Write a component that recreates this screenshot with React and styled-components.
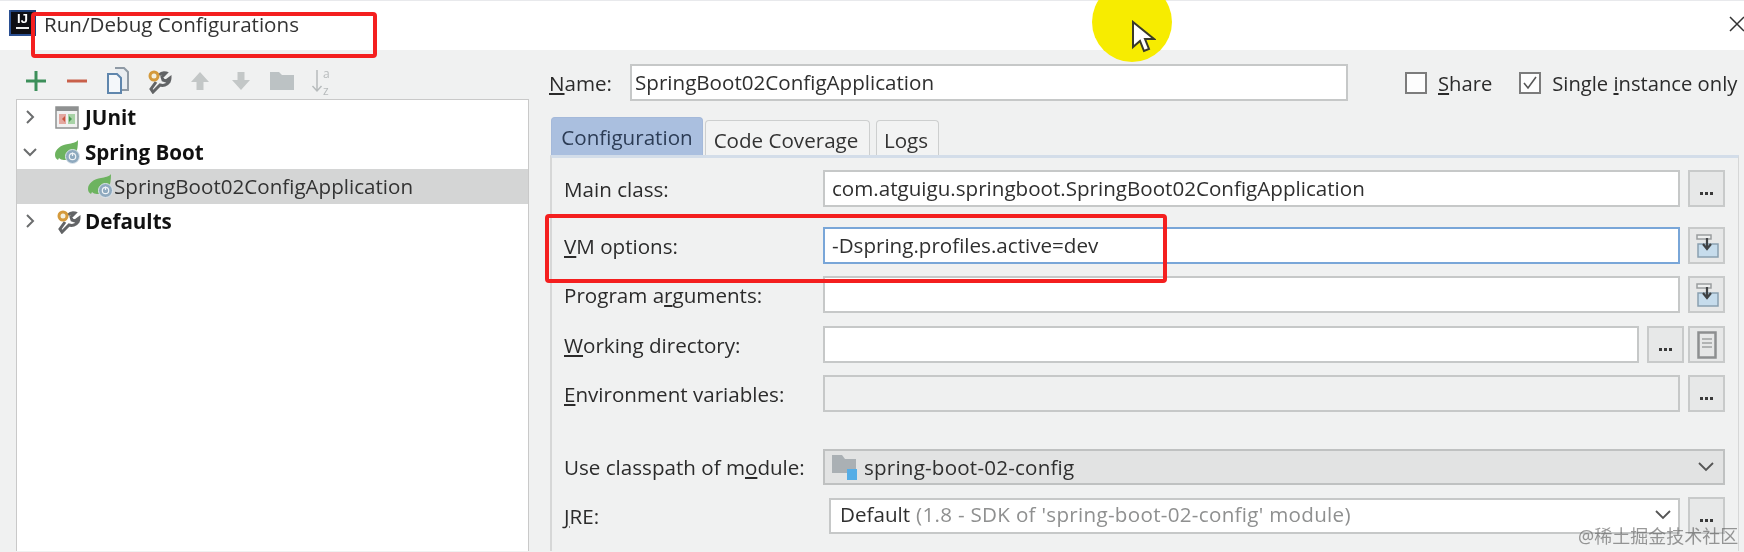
import React from "react";
import styled, { createGlobalStyle } from "styled-components";

const GlobalStyle = createGlobalStyle`
  html, body {
    margin: 0;
    padding: 0;
    background: #f0f1f1;
  }
  * {
    box-sizing: border-box;
  }
`;

const Page = styled.div`
  position: relative;
  width: 1744px;
  height: 552px;
  overflow: hidden;
  background: #f0f1f1;
  color: #2b2b2b;
  font-family: "Open Sans", "Noto Sans", sans-serif;
  font-size: 20.6px;
  filter: blur(0.55px);
`;

const TitleBar = styled.header`
  display: flex;
  align-items: flex-start;
  height: 50px;
  padding: 10px 0 0 9px;
  background: #fff;
  border-top: 1px solid #e8e9ec;
`;

const Logo = styled.div`
  display: flex;
  flex-direction: column;
  align-items: center;
  width: 27px;
  height: 26px;
  margin-top: -1px;
  padding-top: 1px;
  background: #0e0e14;
  box-shadow: inset -2px 0 0 #1f3f78, inset 2px -2px 0 #2a4f92, inset 0 2px 0 #1f3f78;
  color: #fff;
  font-family: "Liberation Sans", sans-serif;
  font-size: 13px;
  font-weight: 700;
  line-height: 15px;
  &::after {
    content: "";
    width: 13px;
    height: 2px;
    margin-top: 1px;
    background: #eee;
  }
`;

const Title = styled.h1`
  margin: -1px 0 0 8px;
  font-size: 20.6px;
  font-weight: 400;
  line-height: 28px;
  color: #333;
`;

const CloseIcon = styled.svg`
  position: absolute;
  top: 16px;
  left: 1729px;
`;

const Body = styled.main`
  display: flex;
  height: 501px;
`;

const Sidebar = styled.aside`
  display: flex;
  flex-direction: column;
  width: 549px;
  padding-left: 16px;
  padding-right: 20px;
`;

const Toolbar = styled.div`
  display: grid;
  grid-template-columns: repeat(8, 41px);
  justify-items: center;
  align-items: center;
  height: 49px;
  margin-left: -1px;
  padding-top: 12px;
`;

const Tree = styled.ul`
  flex: 1;
  margin: 0;
  padding: 0;
  list-style: none;
  background: #fff;
  border: 1px solid #c9c9c9;
  border-bottom: 0;
`;

const TreeRow = styled.li`
  display: flex;
  align-items: center;
  height: 34.6px;
  padding-left: ${(p) => p.$indent}px;
  background: ${(p) => (p.$selected ? "#d4d5d5" : "transparent")};
  font-size: 20.6px;
  font-weight: ${(p) => (p.$bold ? 700 : 400)};
  color: ${(p) => (p.$bold ? "#111" : "#333")};
`;

const Arrow = styled.svg`
  flex: none;
  width: 14px;
  height: 14px;
  margin-right: 18px;
`;

const TreeIconBox = styled.span`
  display: flex;
  flex: none;
  margin-right: ${(p) => p.$gap}px;
`;

const Content = styled.section`
  flex: 1;
  display: flex;
  flex-direction: column;
  padding-right: 5px;
`;

const NameRow = styled.div`
  display: flex;
  align-items: center;
  height: 37px;
  margin-top: 14px;
`;

const NameLabel = styled.label`
  width: 81px;
  flex: none;
`;

const Field = styled.div`
  display: flex;
  align-items: center;
  flex: ${(p) => (p.$width ? "none" : 1)};
  width: ${(p) => (p.$width ? `${p.$width}px` : "auto")};
  min-width: 0;
  height: ${(p) => p.$height || 37}px;
  padding-left: ${(p) => p.$pad || 7}px;
  padding-bottom: 2px;
  background: ${(p) => (p.$disabled ? "#eff0f0" : "#fff")};
  border: 2px solid ${(p) => (p.$focused ? "#79a6d8" : "#c6c8c8")};
  white-space: nowrap;
  color: #2f2f2f;
`;

const Check = styled.label`
  display: flex;
  align-items: center;
  margin-left: ${(p) => p.$left}px;
  font-size: 20.2px;
`;

const Box = styled.span`
  display: flex;
  align-items: center;
  justify-content: center;
  width: 22px;
  height: 22px;
  margin-right: ${(p) => p.$gap}px;
  background: #fdfdfd;
  border: 2px solid #7c7c7c;
`;

const Key = styled.span`
  text-decoration: underline;
  text-underline-offset: 2px;
`;

const Tabs = styled.div`
  display: flex;
  align-items: flex-end;
  height: 54px;
  margin: 0 0 0 2px;
`;

const Tab = styled.div`
  display: flex;
  align-items: center;
  justify-content: center;
  width: ${(p) => p.$width}px;
  height: ${(p) => (p.$active ? 38 : 35)}px;
  margin-right: ${(p) => p.$gap}px;
  padding-top: ${(p) => (p.$active ? 0 : 3)}px;
  padding-right: ${(p) => (p.$active ? 0 : 3)}px;
  border-radius: 4px 4px 0 0;
  background: ${(p) => (p.$active ? "#aabfdf" : "#f2f3f3")};
  border: 1px solid ${(p) => (p.$active ? "#a4b9da" : "#cdcfcf")};
  border-bottom: 0;
  color: ${(p) => (p.$active ? "#2c3c55" : "#333")};
`;

const Panel = styled.div`
  flex: 1;
  display: flex;
  flex-direction: column;
  margin-left: 1px;
  padding: 12px 13px 0 12px;
  border-top: 3px solid #d3dde9;
  border-left: 2px solid #d6d7d7;
  border-right: 1px solid #d6d7d7;
`;

const FormRow = styled.div`
  display: flex;
  align-items: center;
  margin-top: ${(p) => p.$top || 0}px;
`;

const RowLabel = styled.label`
  flex: none;
  width: ${(p) => p.$width || 259}px;
  white-space: nowrap;
`;

const SquareButton = styled.button`
  display: flex;
  align-items: center;
  justify-content: center;
  flex: none;
  width: 37px;
  height: ${(p) => p.$height || 37}px;
  margin-left: ${(p) => p.$left || 8}px;
  padding: 0;
  background: #e7e8e8;
  border: 2px solid #c8caca;
  color: #333;
`;

const Dots = styled.span`
  display: flex;
  gap: 2px;
  margin-top: 9px;
  & i {
    width: 3px;
    height: 3px;
    background: #3a3a3a;
  }
`;

const Select = styled.div`
  flex: 1;
  display: flex;
  align-items: center;
  height: 36px;
  padding: 0 9px 0 7px;
  background: #e2e3e3;
  border: 2px solid #bfc1c1;
`;

const ModuleName = styled.span`
  flex: 1;
  margin-left: 7px;
  letter-spacing: 0.2px;
  color: #2f2f2f;
`;

const Muted = styled.span`
  color: #8f9090;
  margin-left: 6px;
  letter-spacing: 0.3px;
`;

const FieldText = styled.span`
  flex: 1;
  padding-bottom: 2px;
`;

const RedFrame = styled.div`
  position: absolute;
  left: ${(p) => p.$x}px;
  top: ${(p) => p.$y}px;
  width: ${(p) => p.$w}px;
  height: ${(p) => p.$h}px;
  border: 4px solid #f41f1f;
  border-radius: 4px;
`;

const Spotlight = styled.div`
  position: absolute;
  left: 1092px;
  top: -18px;
  width: 80px;
  height: 80px;
  border-radius: 50%;
  background: #f7ec00;
`;

const Pointer = styled.svg`
  position: absolute;
  left: 1130px;
  top: 20px;
`;

const Watermark = styled.div`
  position: absolute;
  left: 1578px;
  top: 524px;
  color: rgba(90, 90, 90, 0.62);
  font-family: "Noto Sans", "Noto Sans CJK SC", sans-serif;
  font-size: 18px;
  line-height: 24px;
  white-space: nowrap;
`;

const Plus = () => (
  <svg width="24" height="24" viewBox="0 0 24 24">
    <path d="M12 2v20M2 12h20" stroke="#3c8f5a" strokeWidth="3" />
  </svg>
);

const Minus = () => (
  <svg width="24" height="24" viewBox="0 0 24 24">
    <path d="M2 12h20" stroke="#c9604a" strokeWidth="3" />
  </svg>
);

const Copy = () => (
  <svg width="24" height="28" viewBox="0 0 24 28">
    <path d="M9 1h9l4 4v18h-6" fill="#e9edf1" stroke="#8f9aa5" strokeWidth="2" />
    <path d="M2 7h9l4 4v15H2z" fill="#f4f7fa" stroke="#5f86ad" strokeWidth="2" />
  </svg>
);

const Wrench = ({ size = 26 }) => (
  <svg width={size} height={size} viewBox="0 0 26 26">
    <path d="M10 14L5 21l2 3 7-7c3 1 7 0 9-3 1-2 1-3 1-4l-4 3-3-1-1-3 4-4c-3-1-5 0-7 2" fill="none" stroke="#626466" strokeWidth="3" />
    <circle cx="8" cy="8" r="4" fill="#f4f0df" stroke="#d49a3c" strokeWidth="3" />
  </svg>
);

const ArrowUp = () => (
  <svg width="24" height="24" viewBox="0 0 24 24">
    <path d="M12 3l9 10h-5.5v8h-7v-8H3z" fill="#c3c7c7" />
  </svg>
);

const ArrowDown = () => (
  <svg width="24" height="24" viewBox="0 0 24 24">
    <path d="M12 21L3 11h5.5V3h7v8H21z" fill="#c3c7c7" />
  </svg>
);

const Folder = () => (
  <svg width="24" height="20" viewBox="0 0 24 20">
    <path d="M0 1h9l3 3h12v15H0z" fill="#bcc2c4" />
  </svg>
);

const SortAz = () => (
  <svg width="24" height="28" viewBox="0 0 24 28" fontFamily="Open Sans, sans-serif" fontSize="12" fill="#b7bbbc" overflow="visible">
    <path d="M6 3v21M1.500 19l4.500 5 4.500-5" fill="none" stroke="#b7bbbc" strokeWidth="1.500" />
    <text x="12" y="11">a</text>
    <text x="12" y="27.500">z</text>
  </svg>
);

const JUnitIcon = () => (
  <svg width="24" height="23" viewBox="0 0 24 23">
    <rect x="1" y="1" width="22" height="21" fill="#f1f1f1" stroke="#8f9191" strokeWidth="1.500" />
    <rect x="1" y="1" width="22" height="4" fill="#8f9191" />
    <path d="M4 8h7v10H4z" fill="#e3a8a0" />
    <path d="M13 8h7v10h-7z" fill="#a8d2a6" />
    <path d="M10 10l-3 3 3 3z" fill="#c9543f" />
    <path d="M14 10l3 3-3 3z" fill="#4b9a55" />
  </svg>
);

const SpringIcon = () => (
  <svg width="25" height="24" viewBox="0 0 25 24">
    <path d="M23 0c-2 3-6 3-10 4C6 5 0 9 0 15c0 2 1 4 3 5l1-2c1 1 3 2 5 2h6c5-2 8-8 8-20z" fill="#6db35f" />
    <circle cx="17.500" cy="16.500" r="7" fill="#8faabf" stroke="#dfe6ec" strokeWidth="1" />
    <circle cx="17.500" cy="16.500" r="3.200" fill="none" stroke="#f0f4f7" strokeWidth="1.200" />
    <path d="M17.500 12.500v3.500" stroke="#f0f4f7" strokeWidth="1.200" />
  </svg>
);

const Chevron = ({ open }) => (
  <Arrow viewBox="0 0 14 14">
    <path d={open ? "M1 4l6 6 6-6" : "M4 1l6 6-6 6"} fill="none" stroke="#6b6d6e" strokeWidth="2" />
  </Arrow>
);

const DropChevron = ({ right = 0 }) => (
  <svg width="16" height="10" viewBox="0 0 16 10" style={{ marginRight: right }}>
    <path d="M1 1l7 7 7-7" fill="none" stroke="#555" strokeWidth="1.800" />
  </svg>
);

const Insert = () => (
  <svg width="26" height="26" viewBox="0 0 26 26">
    <path d="M3 2h14v4H3z" fill="#eef0f0" stroke="#9a9d9e" strokeWidth="1.500" />
    <path d="M4 11h20v13H4z" fill="#c6dcec" stroke="#8aa0b0" strokeWidth="1.500" />
    <path d="M13 5v10M9 11l4 5 4-5" fill="none" stroke="#3f4244" strokeWidth="2.200" />
  </svg>
);

const Doc = () => (
  <svg width="20" height="28" viewBox="0 0 20 28">
    <rect x="1.500" y="1.500" width="17" height="25" fill="#e6e7e7" stroke="#8d8f90" strokeWidth="2.500" />
    <path d="M5 8h10M5 12h10M5 16h10" stroke="#a0a2a3" strokeWidth="1.300" />
  </svg>
);

const ModuleIcon = () => (
  <svg width="25" height="26" viewBox="0 0 25 26">
    <path d="M0 1h10l3 4h11v14H0z" fill="#aab0b4" />
    <rect x="15" y="15" width="10" height="11" fill="#55ade6" />
  </svg>
);

const MoreButton = (props) => (
  <SquareButton {...props}>
    <Dots>
      <i />
      <i />
      <i />
    </Dots>
  </SquareButton>
);

const App = () => {
  return (
    <Page>
      <GlobalStyle />
      <TitleBar>
        <Logo>IJ</Logo>
        <Title>Run/Debug Configurations</Title>
        <CloseIcon width="16" height="16" viewBox="0 0 16 16">
          <path d="M1 1l14 14M15 1L1 15" stroke="#333" strokeWidth="1.500" />
        </CloseIcon>
      </TitleBar>

      <Body>
        <Sidebar>
          <Toolbar>
            <Plus />
            <Minus />
            <Copy />
            <Wrench />
            <ArrowUp />
            <ArrowDown />
            <Folder />
            <SortAz />
          </Toolbar>
          <Tree>
            <TreeRow $indent={6} $bold>
              <Chevron />
              <TreeIconBox $gap={6}>
                <JUnitIcon />
              </TreeIconBox>
              JUnit
            </TreeRow>
            <TreeRow $indent={6} $bold>
              <Chevron open />
              <TreeIconBox $gap={5}>
                <SpringIcon />
              </TreeIconBox>
              Spring Boot
            </TreeRow>
            <TreeRow $indent={71} $selected>
              <TreeIconBox $gap={1}>
                <SpringIcon />
              </TreeIconBox>
              SpringBoot02ConfigApplication
            </TreeRow>
            <TreeRow $indent={6} $bold>
              <Chevron />
              <TreeIconBox $gap={4}>
                <Wrench />
              </TreeIconBox>
              Defaults
            </TreeRow>
          </Tree>
        </Sidebar>

        <Content>
          <NameRow>
            <NameLabel>
              <Key>N</Key>ame:
            </NameLabel>
            <Field $width={718} $pad={3}>
              SpringBoot02ConfigApplication
            </Field>
            <Check $left={57}>
              <Box $gap={11} />
              <span>
                <Key>S</Key>hare
              </span>
            </Check>
            <Check $left={27}>
              <Box $gap={11}>
                <svg width="14" height="14" viewBox="0 0 14 14">
                  <path d="M1 7l4 5 8-11" fill="none" stroke="#555" strokeWidth="1.600" />
                </svg>
              </Box>
              <span>
                Single <Key>i</Key>nstance only
              </span>
            </Check>
          </NameRow>

          <Tabs>
            <Tab $active $width={152} $gap={2}>Configuration</Tab>
            <Tab $width={165} $gap={6}>Code Coverage</Tab>
            <Tab $width={63} $gap={0}>Logs</Tab>
          </Tabs>

          <Panel>
            <FormRow>
              <RowLabel>Main class:</RowLabel>
              <Field>com.atguigu.springboot.SpringBoot02ConfigApplication</Field>
              <MoreButton />
            </FormRow>
            <FormRow $top={20}>
              <RowLabel>
                <Key>V</Key>M options:
              </RowLabel>
              <Field $focused>-Dspring.profiles.active=dev</Field>
              <SquareButton>
                <Insert />
              </SquareButton>
            </FormRow>
            <FormRow $top={12}>
              <RowLabel>
                Program a<Key>r</Key>guments:
              </RowLabel>
              <Field />
              <SquareButton>
                <Insert />
              </SquareButton>
            </FormRow>
            <FormRow $top={13}>
              <RowLabel>
                <Key>W</Key>orking directory:
              </RowLabel>
              <Field />
              <MoreButton />
              <SquareButton $left={4}>
                <Doc />
              </SquareButton>
            </FormRow>
            <FormRow $top={12}>
              <RowLabel>
                <Key>E</Key>nvironment variables:
              </RowLabel>
              <Field $disabled />
              <MoreButton />
            </FormRow>
            <FormRow $top={37}>
              <RowLabel>
                Use classpath of m<Key>o</Key>dule:
              </RowLabel>
              <Select>
                <ModuleIcon />
                <ModuleName>spring-boot-02-config</ModuleName>
                <DropChevron />
              </Select>
            </FormRow>
            <FormRow $top={12}>
              <RowLabel $width={265}>
                <Key>J</Key>RE:
              </RowLabel>
              <Field $pad={9} $height={36}>
                <FieldText>
                  Default<Muted>(1.8 - SDK of 'spring-boot-02-config' module)</Muted>
                </FieldText>
                <DropChevron right={7} />
              </Field>
              <MoreButton />
            </FormRow>
          </Panel>
        </Content>
      </Body>

      <RedFrame $x={31} $y={12} $w={346} $h={46} />
      <RedFrame $x={545} $y={214} $w={622} $h={69} />
      <Spotlight />
      <Pointer width="26" height="36" viewBox="0 0 26 36">
        <path d="M3 2v25l7-6 4 10 5-2-4-10h9z" fill="#fff" stroke="#3a3a2a" strokeWidth="2" />
      </Pointer>
      <Watermark>@稀土掘金技术社区</Watermark>
    </Page>
  );
};

export default App;
